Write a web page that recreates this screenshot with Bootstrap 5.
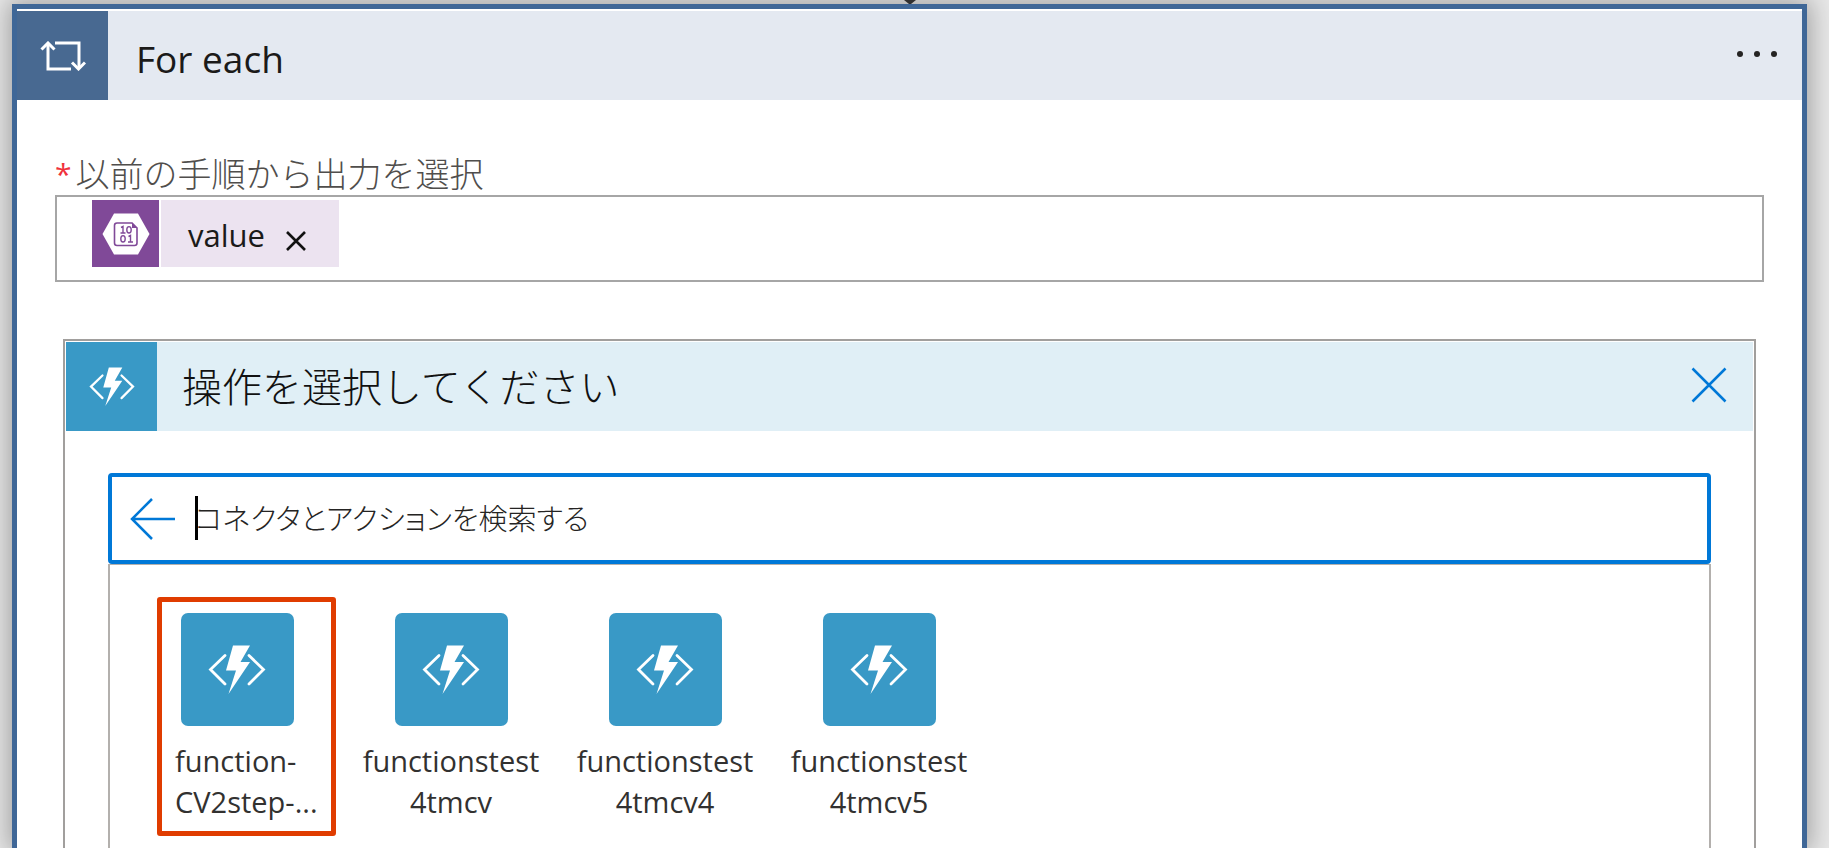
<!DOCTYPE html>
<html lang="ja">
<head>
<meta charset="utf-8">
<meta name="viewport" content="width=device-width, initial-scale=1">
<title>For each</title>
<link href="https://cdn.jsdelivr.net/npm/bootstrap@5.3.0/dist/css/bootstrap.min.css" rel="stylesheet">
<style>
  body { background: #e8e8e8; font-family: "Open Sans", "Noto Sans CJK JP", sans-serif; color: #1b1a19; }
  .canvas { padding: 0 22px 0 12px; overflow: hidden; }
  .loop-card { background: #fff; border: 5px solid #3f6797; border-bottom: 0; padding-top: 2px; box-shadow: 0 0 24px 4px rgba(0, 0, 0, .3); }
  .head { height: 89px; }
  .head-icon { width: 91px; }
  .loop-head { background: #e4e9f1; }
  .loop-icon { background: #486991; }
  .loop-title { font-size: 37px; line-height: 48px; padding: 6px 0 0 28px; }
  .more { padding: 0 24px 4px 0; }
  .loop-body { padding: 55px 38px 0; }
  .field-label { font-size: 34px; line-height: 38px; padding-bottom: 2px; font-weight: 300; color: #504e4c; gap: 4px; }
  .required { font-size: 30px; font-weight: 400; color: #f0323c; }
  .token-box { border: 2px solid #a6a6a6; height: 87px; padding: 3px 35px; }
  .token-icon { width: 67px; height: 67px; background: #804998; }
  .token { height: 67px; gap: 2px; }
  .token-text { background: #ece3f0; width: 178px; padding: 2px 0 0 27px; gap: 21px; font-size: 31px; line-height: 40px; }
  .action-card { border: 2px solid #a19f9d; border-bottom: 0; padding: 1px 1px 0; margin: 57px 8px 0; }
  .action-head { background: #e0eff6; }
  .fn { background: #3999c6; }
  .action-title { font-size: 40px; line-height: 48px; font-weight: 300; padding-left: 25px; color: #111; }
  .close-btn { margin: 0 26px 4px 0; }
  .action-body { padding: 42px 42px 0; }
  .search { border: 4px solid #0078d7; border-radius: 4px; height: 91px; padding-left: 18px; gap: 19px; }
  .search input { font-size: 29px; font-weight: 300; font-feature-settings: "palt"; color: #333; height: 64px; }
  .search input::placeholder { color: #252423; opacity: 1; }
  .search input:focus { box-shadow: none; }
  .caret { width: 3px; height: 44px; left: 0; top: 9px; background: #000; }
  .results { border: solid #b3b0ad; border-width: 1px 2px 0; padding: 48px 38px 0; gap: 36px; }
  .tile { width: 178px; color: #323130; font-size: 29px; line-height: 41px; }
  .tile-icon { width: 113px; height: 113px; border-radius: 7px; margin-bottom: 14px; }
  .tile-name { width: 178px; }
  .tile-first .tile-name { padding-left: 27px; text-align: left; }
  .marker { left: 9px; top: -16px; width: 179px; height: 239px; border: 5px solid #e03c00; border-radius: 3px; pointer-events: none; }
</style>
</head>
<body>
<svg class="d-none" xmlns="http://www.w3.org/2000/svg">
  <symbol id="function" viewBox="0 0 58 50">
    <path d="M17 10.500 2.500 24.500 17 39M41 10.500 55.500 24.500 41 39" fill="none" stroke="#fff" stroke-width="2.800" stroke-linecap="round" stroke-linejoin="miter"/>
    <path d="M25 .5H42L32.500 17H42L20.500 49 28 25.500H18Z" fill="#fff"/>
  </symbol>
</svg>
<main class="canvas vh-100 d-flex flex-column">
  <svg class="d-block mx-auto flex-shrink-0" width="12" height="4" viewBox="0 0 12 4" aria-hidden="true"><path d="M0 0H12L7 4H5Z" fill="#3b3a39"/></svg>
  <section class="loop-card flex-grow-1 d-flex flex-column">
    <header class="head loop-head d-flex align-items-center flex-shrink-0">
      <div class="head-icon loop-icon h-100 d-flex align-items-center justify-content-center">
        <svg width="46" height="30" viewBox="0 0 46 30" fill="none" stroke="#fff" stroke-width="3" aria-hidden="true">
          <path d="M15 2H39V27M31 28H8V3"/><path d="M1.500 8.500 8 2 14.500 8.500M32 21.500 38.500 28 45 21.500"/>
        </svg>
      </div>
      <h1 class="loop-title fw-normal mb-0">For each</h1>
      <button type="button" class="btn border-0 more ms-auto d-flex" aria-label="More">
        <svg width="42" height="8" viewBox="0 0 42 8" fill="#252423"><circle cx="4" cy="4" r="3"/><circle cx="21" cy="4" r="3"/><circle cx="38" cy="4" r="3"/></svg>
      </button>
    </header>
    <div class="loop-body flex-grow-1 d-flex flex-column">
      <div class="field-label d-flex" id="outputs"><span class="required">*</span><span>以前の手順から出力を選択</span></div>
      <div class="token-box" role="group" aria-labelledby="outputs">
        <div class="token d-inline-flex">
          <div class="token-icon d-flex align-items-center justify-content-center">
            <svg width="48" height="42" viewBox="0 0 48 42" aria-hidden="true">
              <path d="M12 .5H36L47.500 21 36 41.500H12L.5 21Z" fill="#fff"/>
              <path d="M15 10H30L35 15V30Q35 32.500 32.500 32.500H15Q12.500 32.500 12.500 30V12.500Q12.500 10 15 10Z" fill="none" stroke="#804998" stroke-width="1.600"/>
              <path d="M30 9.500V15H35.500Z" fill="#804998"/>
              <g fill="none" stroke="#804998" stroke-width="1.400"><path d="M19 14.500 21 13.500V20M18.500 20H23.500M26.500 23.500 28.500 22.500V29M26 29H31"/><ellipse cx="27" cy="16.800" rx="2.200" ry="3.200"/><ellipse cx="21" cy="25.800" rx="2.200" ry="3.200"/></g>
            </svg>
          </div>
          <div class="token-text d-flex align-items-center"><span>value</span>
            <button type="button" class="btn border-0 p-0 pt-2 mt-1 d-flex" aria-label="Remove"><svg width="20" height="20" viewBox="0 0 20 20" stroke="#111" stroke-width="2.600"><path d="M1 1 19 19M19 1 1 19"/></svg></button>
          </div>
        </div>
      </div>
      <section class="action-card flex-grow-1 d-flex flex-column">
        <header class="head action-head d-flex align-items-center flex-shrink-0">
          <div class="head-icon fn h-100 d-flex align-items-center justify-content-center"><svg width="46" height="40" aria-hidden="true"><use href="#function"/></svg></div>
          <h2 class="action-title mb-0">操作を選択してください</h2>
          <button type="button" class="btn border-0 p-0 close-btn ms-auto d-flex" aria-label="閉じる"><svg width="36" height="36" viewBox="0 0 36 36" stroke="#0078d7" stroke-width="2.500"><path d="M1.500 1.500 34.500 34.500M34.500 1.500 1.500 34.500"/></svg></button>
        </header>
        <div class="action-body flex-grow-1 d-flex flex-column">
          <div class="search d-flex align-items-center flex-shrink-0">
            <button type="button" class="btn border-0 p-0 d-flex" aria-label="戻る"><svg width="46" height="42" viewBox="0 0 46 42" fill="none" stroke="#0078d7" stroke-width="2.500"><path d="M45 21H2M22 1 2 21 22 41"/></svg></button>
            <div class="position-relative flex-grow-1">
              <input type="text" class="form-control border-0 p-0" aria-label="検索" placeholder="コネクタとアクションを検索する">
              <span class="caret position-absolute"></span>
            </div>
          </div>
          <div class="results flex-grow-1 d-flex align-items-start">
            <button type="button" class="btn border-0 p-0 tile tile-first position-relative d-flex flex-column align-items-center"><span class="tile-icon fn d-flex align-items-center justify-content-center"><svg width="58" height="50" aria-hidden="true"><use href="#function"/></svg></span><span class="tile-name">function-<br>CV2step-...</span><span class="marker position-absolute"></span></button>
            <button type="button" class="btn border-0 p-0 tile d-flex flex-column align-items-center"><span class="tile-icon fn d-flex align-items-center justify-content-center"><svg width="58" height="50" aria-hidden="true"><use href="#function"/></svg></span><span class="tile-name">functionstest<br>4tmcv</span></button>
            <button type="button" class="btn border-0 p-0 tile d-flex flex-column align-items-center"><span class="tile-icon fn d-flex align-items-center justify-content-center"><svg width="58" height="50" aria-hidden="true"><use href="#function"/></svg></span><span class="tile-name">functionstest<br>4tmcv4</span></button>
            <button type="button" class="btn border-0 p-0 tile d-flex flex-column align-items-center"><span class="tile-icon fn d-flex align-items-center justify-content-center"><svg width="58" height="50" aria-hidden="true"><use href="#function"/></svg></span><span class="tile-name">functionstest<br>4tmcv5</span></button>
          </div>
        </div>
      </section>
    </div>
  </section>
</main>
<script src="https://cdn.jsdelivr.net/npm/bootstrap@5.3.0/dist/js/bootstrap.bundle.min.js"></script>
</body>
</html>
